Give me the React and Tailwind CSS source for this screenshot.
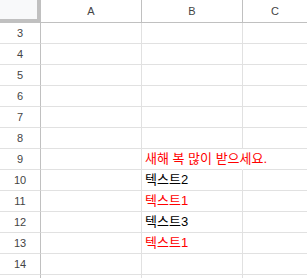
import React from 'react'

const RED = 'text-[#ff0000]'
const BLACK = 'text-black'

// 행 번호 → B열 내용
const cells = {
  9: { text: '새해 복 많이 받으세요.', color: RED, overflow: true },
  10: { text: '텍스트2', color: BLACK },
  11: { text: '텍스트1', color: RED },
  12: { text: '텍스트3', color: BLACK },
  13: { text: '텍스트1', color: RED },
}

const rowNums = [3, 4, 5, 6, 7, 8, 9, 10, 11, 12, 13, 14]

const headFont = { fontFamily: '"Liberation Sans", Arial, sans-serif' }
const cellFont = { fontFamily: '"Liberation Sans", Arial, "Noto Sans CJK KR", sans-serif' }

function Row({ n }) {
  const c = cells[n]
  return (
    <div className="flex h-[21px] shrink-0">
      <div
        className="flex w-[41px] shrink-0 items-center justify-center border-r border-b border-r-[#c0c0c0] border-b-[#e1e1e1] bg-white text-[11px] text-[#444]"
        style={headFont}
      >
        {n}
      </div>
      <div className="w-[101px] shrink-0 border-r border-b border-[#e1e1e1]" />
      <div
        className={[
          'relative z-10 flex w-[101px] shrink-0 items-end border-b border-b-[#e1e1e1] pb-[2px] pl-[3px]',
          c && c.overflow ? 'border-r border-r-transparent' : 'border-r border-r-[#e1e1e1]',
        ].join(' ')}
      >
        {c && (
          <span className={`whitespace-nowrap text-[13px] leading-[17px] ${c.color}`} style={cellFont}>
            {c.text}
          </span>
        )}
      </div>
      <div className="flex-1 border-b border-[#e1e1e1]" />
    </div>
  )
}

export default function App() {
  return (
    <div className="flex h-[278px] w-[307px] flex-col overflow-hidden bg-white">
      {/* 열 머리글 */}
      <div className="flex h-[23px] shrink-0">
        <div className="w-[41px] shrink-0 border-r-4 border-b-4 border-[#c0c0c0] bg-[#f8f9fa]" />
        {['A', 'B'].map((l) => (
          <div
            key={l}
            className="flex w-[101px] shrink-0 items-center justify-center border-r border-b border-[#c0c0c0] bg-white text-[11px] text-[#444]"
            style={headFont}
          >
            {l}
          </div>
        ))}
        <div
          className="flex flex-1 items-center justify-center border-b border-[#c0c0c0] bg-white text-[11px] text-[#444]"
          style={headFont}
        >
          C
        </div>
      </div>
      {rowNums.map((n) => (
        <Row key={n} n={n} />
      ))}
      {/* 15행 윗부분만 보임 */}
      <div className="flex h-[21px] shrink-0">
        <div className="w-[41px] shrink-0 border-r border-[#c0c0c0]" />
        <div className="w-[101px] shrink-0 border-r border-[#e1e1e1]" />
        <div className="w-[101px] shrink-0 border-r border-[#e1e1e1]" />
      </div>
    </div>
  )
}
